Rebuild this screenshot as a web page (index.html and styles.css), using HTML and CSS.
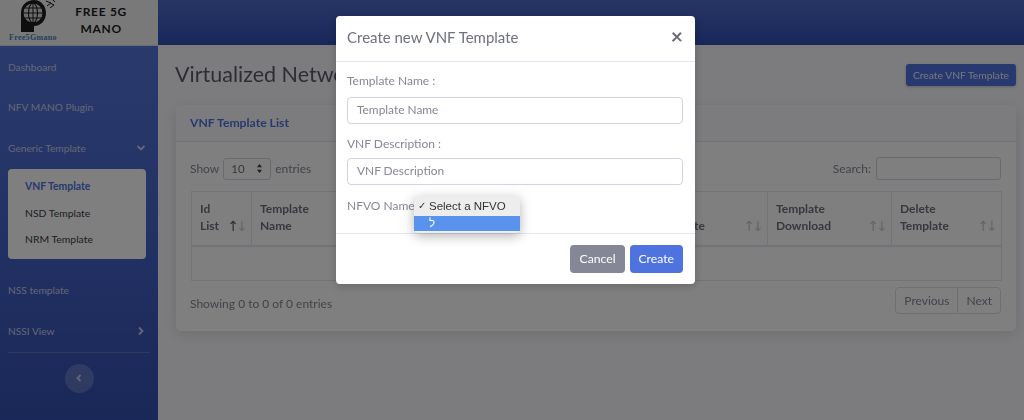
FILE: index.html
```html
<!DOCTYPE html>
<html lang="en">
<head>
    <meta charset="UTF-8">
    <title>Free 5G MANO</title>
    <link rel="stylesheet" href="styles.css">
</head>
<body>
<div class="wrapper">
    <aside class="sidebar">
        <div class="brand">
            <svg class="brand-logo" width="56" height="44" viewBox="0 0 56 44">
                <path d="M21 32 L21 13 C21 5 27 0 34 0 C41 0 46 6 46 13 C46 20 41 26 34 26 L34 32 Z" fill="#1c1c1c"/>
                <circle cx="33" cy="13" r="10" fill="#d8d8d8" stroke="#1c1c1c" stroke-width="1"/>
                <ellipse cx="33" cy="13" rx="4.5" ry="10" fill="none" stroke="#1c1c1c" stroke-width="1.1"/>
                <path d="M23 13 H43 M33 3 V23 M24.5 8 H41.5 M24.5 18 H41.5" stroke="#1c1c1c" stroke-width="1"/>
                <path d="M46 1 L51 3 L47 6 M50 8 L54 5 L50 3 M53 0 L55 2" fill="none" stroke="#1c1c1c" stroke-width="1"/>
            </svg>
            <span class="brand-mark">Free5Gmano</span>
            <div class="brand-title">FREE 5G<br>MANO</div>
        </div>
        <ul class="nav nav-upper">
            <li class="nav-item">Dashboard</li>
            <li class="nav-item">NFV MANO Plugin</li>
            <li class="nav-item">Generic Template
                <svg width="10" height="10" viewBox="0 0 10 10"><path d="M1.5 3 L5 6.5 L8.5 3" class="chev"/></svg>
            </li>
        </ul>
        <div class="submenu">
            <a class="active">VNF Template</a>
            <a>NSD Template</a>
            <a>NRM Template</a>
        </div>
        <ul class="nav nav-lower">
            <li class="nav-item">NSS template</li>
            <li class="nav-item">NSSI View
                <svg width="10" height="10" viewBox="0 0 10 10"><path d="M3 1.5 L6.5 5 L3 8.5" class="chev"/></svg>
            </li>
        </ul>
        <hr class="side-divider">
        <div class="toggle">
            <svg width="10" height="10" viewBox="0 0 10 10"><path d="M6.5 2 L3.5 5 L6.5 8" class="chev"/></svg>
        </div>
    </aside>

    <div class="content">
        <div class="topbar"></div>
        <main class="main">
            <div class="heading-row">
                <h1>Virtualized Network Function</h1>
                <a class="btn-top">Create VNF Template</a>
            </div>
            <section class="card">
                <div class="card-header">VNF Template List</div>
                <div class="card-body">
                    <div class="table-tools">
                        <div class="length">Show <span class="length-box">10 <svg width="7" height="11" viewBox="0 0 7 11"><path d="M3.5 1 L6 4.3 H1 Z M3.5 10 L6 6.7 H1 Z" fill="#3f3f44"/></svg></span> entries</div>
                        <div class="search">Search: <span class="search-box"></span></div>
                    </div>
                    <table class="table">
                        <thead>
                            <tr>
                                <th class="c1">Id<br>List <span class="sort"><b>↑</b>↓</span></th>
                                <th class="c2">Template<br>Name</th>
                                <th class="c3"></th>
                                <th class="c4"></th>
                                <th class="c5">Device<br>Template <span class="sort">↑↓</span></th>
                                <th class="c6">Template<br>Download <span class="sort">↑↓</span></th>
                                <th class="c7">Delete<br>Template <span class="sort">↑↓</span></th>
                            </tr>
                        </thead>
                        <tbody>
                            <tr><td colspan="7"></td></tr>
                        </tbody>
                    </table>
                    <div class="table-foot">
                        <div class="info">Showing 0 to 0 of 0 entries</div>
                        <div class="pager"><a>Previous</a><a>Next</a></div>
                    </div>
                </div>
            </section>
        </main>
    </div>
</div>

<div class="backdrop"></div>

<div class="modal-layer">
    <div class="modal">
        <div class="modal-header">
            <span class="modal-title">Create new VNF Template</span>
            <span class="close">×</span>
        </div>
        <div class="modal-body">
            <label>Template Name :</label>
            <div class="input">Template Name</div>
            <label>VNF Description :</label>
            <div class="input">VNF Description</div>
            <label class="nfvo">NFVO Name</label>
        </div>
        <div class="modal-footer">
            <a class="btn btn-grey">Cancel</a>
            <a class="btn btn-blue">Create</a>
        </div>
        <div class="select-menu">
            <div class="opt"><span class="tick">✓</span>Select a NFVO</div>
            <div class="opt opt-on"><span class="tick"></span>ל</div>
        </div>
    </div>
</div>
</body>
</html>
```

FILE: styles.css
```css
*{box-sizing:border-box}
html,body{margin:0;padding:0;height:420px;overflow:hidden}
body{font:12px/1.5 Lato,"Open Sans",sans-serif;color:#858796;background:#f8f9fc}
ul{list-style:none;margin:0;padding:0}
a{text-decoration:none}

.wrapper{display:flex;height:420px;filter:blur(.5px)}

/* sidebar */
.sidebar{width:158px;flex:none;background:linear-gradient(180deg,#5a78dc 0%,#4a68ce 45%,#3350b0 100%);color:#c6cfea;font-size:10.2px}
.brand{height:46px;background:#f2f2f2;position:relative;overflow:hidden;border-bottom:1px solid #d5d9e6;display:flex;justify-content:flex-end;align-items:center;padding:0 31px 5px 0}
.brand-logo{position:absolute;left:0;top:0}
.brand-mark{position:absolute;left:9px;top:33px;font:bold 8px/9px "Liberation Serif",serif;color:#3d86b8;letter-spacing:.3px}
.brand-title{font:bold 12px/17px Lato,sans-serif;color:#1e1e1e;text-align:center;letter-spacing:.7px}
.nav-upper{padding-top:1px}
.nav-item{height:40.5px;padding:0 8px;display:flex;align-items:center;justify-content:space-between}
.nav-item svg{margin-right:4px}
.chev{fill:none;stroke:#c6cfea;stroke-width:1.8}
.submenu{margin:0 12px 0 8px;height:90px;background:#fff;border-radius:4px;padding:5px 0 5px;display:flex;flex-direction:column;justify-content:space-around}
.submenu a{padding:0 17px;color:#3a3b45;font-size:10.4px}
.submenu a.active{color:#4e73df;font-weight:700}
.nav-lower{padding-top:12px}
.side-divider{margin:0 8px;border:0;border-top:1px solid rgba(255,255,255,.18)}
.toggle{width:29px;height:29px;border-radius:50%;background:rgba(255,255,255,.2);margin:11px auto 0;display:flex;align-items:center;justify-content:center}

/* main column */
.content{flex:1;min-width:0;display:flex;flex-direction:column}
.topbar{height:45px;background:linear-gradient(180deg,#4e6bc8,#2f4fb5)}
.main{padding:0 8px 0 18px}
.heading-row{height:60px;display:flex;align-items:center;justify-content:space-between}
h1{margin:-2px 0 0 -1px;font-weight:400;font-size:21.5px;color:#5a5c69}
.btn-top{background:#4e73df;color:#e8edfb;font-size:10.3px;padding:3px 7px;line-height:16px;margin-top:-1px;border-radius:3px;box-shadow:0 1px 3px rgba(58,59,69,.3)}
.card{background:#fff;border-radius:5px;box-shadow:0 3px 14px rgba(58,59,69,.14)}
.card-header{height:37px;padding:0 14px;display:flex;align-items:center;background:#f8f9fc;border-bottom:1px solid #e3e6f0;color:#4e73df;font-weight:700;font-size:12.2px;border-radius:5px 5px 0 0}
.card-body{padding:15px 15px 17px}
.table-tools{display:flex;justify-content:space-between;align-items:center;height:23px;margin-bottom:11px}
.length{display:flex;align-items:center;gap:4px;margin-left:-1px}
.length-box{width:48px;height:22px;border:1px solid #d1d3e2;border-radius:3px;display:flex;align-items:center;justify-content:space-between;padding:0 7px;color:#6e707e;font-size:11.5px}
.search{display:flex;align-items:center;gap:5px}
.search-box{width:125px;height:23px;border:1px solid #d1d3e2;border-radius:3px}

.table{width:810px;border-collapse:collapse;table-layout:fixed}
.table th,.table td{border:1px solid #e3e6f0}
.table th{height:54px;padding:0 8px 2px;text-align:left;font-weight:700;font-size:12px;line-height:17px;color:#6e707e;border-bottom:2px solid #e3e6f0;position:relative}
.table td{height:35px}
.c1{width:60px}.c2{width:100px}.c3{width:150px}.c4{width:146px}.c5{width:120px}.c6{width:124px}.c7{width:110px}
.sort{position:absolute;right:6px;bottom:10px;color:#c9cad2;font:14px/17px "DejaVu Sans",sans-serif;letter-spacing:-3px}
.sort b{color:#5a5c69;font-weight:400}
.table-foot{display:flex;justify-content:space-between;align-items:flex-start;margin-top:6px}
.info{padding-top:8px;margin-left:-1px}
.pager{display:flex;border:1px solid #dddfeb;border-radius:4px;height:27px;align-items:center}
.pager a{padding:0 8px;line-height:25px;color:#858796}
.pager a+a{border-left:1px solid #dddfeb}

/* dimmed page behind the dialog */
.backdrop{position:fixed;inset:0;background:rgba(0,0,0,.5)}

/* dialog */
.modal-layer{position:fixed;inset:0;display:flex;justify-content:center;padding:16px 0 0 7px;filter:blur(.35px)}
.modal{width:359px;height:268px;background:#fff;border-radius:4px;position:relative;box-shadow:0 2px 10px rgba(0,0,0,.2)}
.modal-header{height:46px;padding:0 12px 6px 11px;display:flex;justify-content:space-between;align-items:center;border-bottom:1px solid #e3e6f0}
.modal-title{font-size:15px;color:#6e707e;margin-top:4px}
.close{font-size:21px;font-weight:700;color:#6b6c78;line-height:1}
.modal-body{padding:10px 12px 0 11px;height:126px}
.modal-body label{display:block;color:#858796;font-size:12px;line-height:17px}
.input{height:27px;border:1px solid #d1d3e2;border-radius:4px;padding:0 9px;margin:8px 0 11px;line-height:24px;color:#858796;font-size:11.9px}
.input+label+.input{margin:6px 0 12px}
.modal-footer{border-top:1px solid #e3e6f0;display:flex;justify-content:flex-end;gap:5px;padding:11px 12px 0;margin-top:45px}
.btn{height:28px;line-height:28px;padding:0 9px;border-radius:4px;color:#fff;font-size:12.2px}
.btn-grey{background:#858796}
.btn-blue{background:#4e73df}

/* native select popup, open over the form */
.select-menu{position:absolute;left:78px;top:180px;width:106px;height:37px;background:#ededed;border-radius:4px;box-shadow:0 3px 12px rgba(0,0,0,.3);font:11.5px/19px "Liberation Sans",sans-serif;color:#333}
.opt{height:15px;line-height:15px;display:flex}
.opt:first-child{height:20px;line-height:20px}
.tick{width:15px;text-align:right;padding-right:3px;font-size:10px;flex:none}
.opt-on{background:#5a93ee;color:#fff}
```
